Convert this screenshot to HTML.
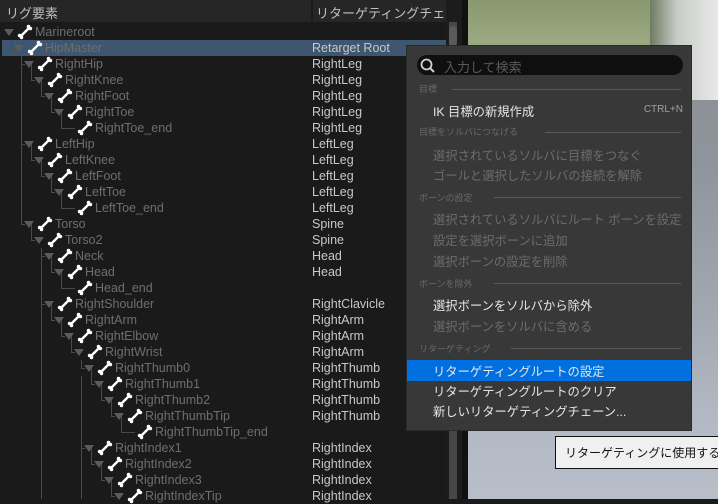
<!DOCTYPE html>
<html><head><meta charset="utf-8"><style>
*{margin:0;padding:0;box-sizing:border-box}
body{width:718px;height:499px;overflow:hidden;position:relative;background:#1a1a1a;font-family:"Liberation Sans","Noto Sans CJK JP",sans-serif;font-size:12.5px}
.abs{position:absolute}
.vp{left:468px;top:0;width:250px;height:499px;overflow:hidden;background:linear-gradient(180deg,#8a9870 0,#9aa882 40px,#8e9c78 90px,#8d9298 100px,#8e949c 160px,#a0a6ae 300px,#b3b9c4 420px,#b8bec8 499px)}
.vp2{left:650px;top:0;width:68px;height:100px;background:linear-gradient(90deg,#6d7c62,#c8ccc8 40%,#e8e8e8)}
.hdr{left:0;top:0;width:446px;height:22px;background:#262626}
.r{position:absolute;left:0;height:16px;width:446px;line-height:16px}
.n{position:absolute;color:#6e6e6e;white-space:nowrap}
.c{position:absolute;left:312px;color:#c8c8c8;white-space:nowrap}
.t{position:absolute;top:5px;width:0;height:0;border-left:5px solid transparent;border-right:5px solid transparent;border-top:7px solid #5b5b5b}
.b{position:absolute;top:0;width:16px;height:16px}
.vl{position:absolute;width:1px;background:#4a4a4a}
.hl{position:absolute;height:1px;background:#4a4a4a}
.menu{left:406px;top:45px;width:286px;height:386px;background:#383838;border:1px solid #2a2a2a;overflow:hidden}
.mh{position:absolute;left:12px;font-size:9px;color:#6a6a6a}
.ml{position:absolute;height:1px;background:#5a5a5a;right:10px}
.mi{position:absolute;left:26px;font-size:12.3px;color:#6c6c6c;white-space:nowrap}
.on{color:#e6e6e6}
</style></head><body>
<div class="abs vp"></div><div class="abs vp2"></div>
<div class="abs" style="left:446px;top:0;width:22px;height:499px;background:#1c1c1c"></div>
<div class="abs" style="left:449px;top:22px;width:8px;height:477px;background:#474747"></div>
<div class="abs" style="left:449px;top:26px;width:8px;height:20px;border-radius:4px;background:#5a5a5a"></div>
<div class="abs" style="left:462px;top:0;width:6px;height:499px;background:#111"></div>
<div class="abs hdr"></div>
<div class="abs" style="left:311px;top:0;width:2px;height:22px;background:#1a1a1a"></div>
<div class="abs" style="left:6px;top:3px;color:#c0c0c0;font-size:13px">リグ要素</div>
<div class="abs" style="left:316px;top:3px;color:#c0c0c0;font-size:13px;white-space:nowrap;width:128px;overflow:hidden">リターゲティングチェーン</div>
<div class="abs" style="left:2px;top:40px;width:444px;height:16px;background:#3f5670"></div>
<div class="vl" style="left:21px;top:56px;height:168px"></div>
<div class="vl" style="left:41px;top:248px;height:251px"></div>
<div class="vl" style="left:81px;top:376px;height:123px"></div>
<div class="vl" style="left:11px;top:40px;height:8px"></div>
<svg width="0" height="0" style="position:absolute"><defs><g id="bn"><line x1="4" y1="12" x2="12" y2="4" stroke="#fff" stroke-width="2.4"/><circle cx="2.6" cy="11.5" r="1.8" fill="#fff"/><circle cx="4.5" cy="13.4" r="1.8" fill="#fff"/><circle cx="11.5" cy="2.6" r="1.8" fill="#fff"/><circle cx="13.4" cy="4.5" r="1.8" fill="#fff"/></g></defs></svg>
<div id="rows">
<div class="r" style="top:24px"><div class="t" style="left:4px"></div><svg class="b" style="left:17px"><use href="#bn"/></svg><span class="n" style="left:35px">Marineroot</span></div>
<div class="r" style="top:40px"><div class="hl" style="left:11px;top:8px;width:4px"></div><div class="t" style="left:14px"></div><svg class="b" style="left:27px"><use href="#bn"/></svg><span class="n" style="left:45px">HipMaster</span><span class="c">Retarget Root</span></div>
<div class="r" style="top:56px"><div class="hl" style="left:21px;top:8px;width:4px"></div><div class="t" style="left:24px"></div><svg class="b" style="left:37px"><use href="#bn"/></svg><span class="n" style="left:55px">RightHip</span><span class="c">RightLeg</span></div>
<div class="r" style="top:72px"><div class="vl" style="left:31px;top:-8px;height:16px"></div><div class="hl" style="left:31px;top:8px;width:4px"></div><div class="t" style="left:34px"></div><svg class="b" style="left:47px"><use href="#bn"/></svg><span class="n" style="left:65px">RightKnee</span><span class="c">RightLeg</span></div>
<div class="r" style="top:88px"><div class="vl" style="left:41px;top:-8px;height:16px"></div><div class="hl" style="left:41px;top:8px;width:4px"></div><div class="t" style="left:44px"></div><svg class="b" style="left:57px"><use href="#bn"/></svg><span class="n" style="left:75px">RightFoot</span><span class="c">RightLeg</span></div>
<div class="r" style="top:104px"><div class="vl" style="left:51px;top:-8px;height:16px"></div><div class="hl" style="left:51px;top:8px;width:4px"></div><div class="t" style="left:54px"></div><svg class="b" style="left:67px"><use href="#bn"/></svg><span class="n" style="left:85px">RightToe</span><span class="c">RightLeg</span></div>
<div class="r" style="top:120px"><div class="vl" style="left:61px;top:-8px;height:16px"></div><div class="hl" style="left:61px;top:8px;width:14px"></div><svg class="b" style="left:77px"><use href="#bn"/></svg><span class="n" style="left:95px">RightToe_end</span><span class="c">RightLeg</span></div>
<div class="r" style="top:136px"><div class="hl" style="left:21px;top:8px;width:4px"></div><div class="t" style="left:24px"></div><svg class="b" style="left:37px"><use href="#bn"/></svg><span class="n" style="left:55px">LeftHip</span><span class="c">LeftLeg</span></div>
<div class="r" style="top:152px"><div class="vl" style="left:31px;top:-8px;height:16px"></div><div class="hl" style="left:31px;top:8px;width:4px"></div><div class="t" style="left:34px"></div><svg class="b" style="left:47px"><use href="#bn"/></svg><span class="n" style="left:65px">LeftKnee</span><span class="c">LeftLeg</span></div>
<div class="r" style="top:168px"><div class="vl" style="left:41px;top:-8px;height:16px"></div><div class="hl" style="left:41px;top:8px;width:4px"></div><div class="t" style="left:44px"></div><svg class="b" style="left:57px"><use href="#bn"/></svg><span class="n" style="left:75px">LeftFoot</span><span class="c">LeftLeg</span></div>
<div class="r" style="top:184px"><div class="vl" style="left:51px;top:-8px;height:16px"></div><div class="hl" style="left:51px;top:8px;width:4px"></div><div class="t" style="left:54px"></div><svg class="b" style="left:67px"><use href="#bn"/></svg><span class="n" style="left:85px">LeftToe</span><span class="c">LeftLeg</span></div>
<div class="r" style="top:200px"><div class="vl" style="left:61px;top:-8px;height:16px"></div><div class="hl" style="left:61px;top:8px;width:14px"></div><svg class="b" style="left:77px"><use href="#bn"/></svg><span class="n" style="left:95px">LeftToe_end</span><span class="c">LeftLeg</span></div>
<div class="r" style="top:216px"><div class="hl" style="left:21px;top:8px;width:4px"></div><div class="t" style="left:24px"></div><svg class="b" style="left:37px"><use href="#bn"/></svg><span class="n" style="left:55px">Torso</span><span class="c">Spine</span></div>
<div class="r" style="top:232px"><div class="vl" style="left:31px;top:-8px;height:16px"></div><div class="hl" style="left:31px;top:8px;width:4px"></div><div class="t" style="left:34px"></div><svg class="b" style="left:47px"><use href="#bn"/></svg><span class="n" style="left:65px">Torso2</span><span class="c">Spine</span></div>
<div class="r" style="top:248px"><div class="hl" style="left:41px;top:8px;width:4px"></div><div class="t" style="left:44px"></div><svg class="b" style="left:57px"><use href="#bn"/></svg><span class="n" style="left:75px">Neck</span><span class="c">Head</span></div>
<div class="r" style="top:264px"><div class="vl" style="left:51px;top:-8px;height:16px"></div><div class="hl" style="left:51px;top:8px;width:4px"></div><div class="t" style="left:54px"></div><svg class="b" style="left:67px"><use href="#bn"/></svg><span class="n" style="left:85px">Head</span><span class="c">Head</span></div>
<div class="r" style="top:280px"><div class="vl" style="left:61px;top:-8px;height:16px"></div><div class="hl" style="left:61px;top:8px;width:14px"></div><svg class="b" style="left:77px"><use href="#bn"/></svg><span class="n" style="left:95px">Head_end</span></div>
<div class="r" style="top:296px"><div class="hl" style="left:41px;top:8px;width:4px"></div><div class="t" style="left:44px"></div><svg class="b" style="left:57px"><use href="#bn"/></svg><span class="n" style="left:75px">RightShoulder</span><span class="c">RightClavicle</span></div>
<div class="r" style="top:312px"><div class="vl" style="left:51px;top:-8px;height:16px"></div><div class="hl" style="left:51px;top:8px;width:4px"></div><div class="t" style="left:54px"></div><svg class="b" style="left:67px"><use href="#bn"/></svg><span class="n" style="left:85px">RightArm</span><span class="c">RightArm</span></div>
<div class="r" style="top:328px"><div class="vl" style="left:61px;top:-8px;height:16px"></div><div class="hl" style="left:61px;top:8px;width:4px"></div><div class="t" style="left:64px"></div><svg class="b" style="left:77px"><use href="#bn"/></svg><span class="n" style="left:95px">RightElbow</span><span class="c">RightArm</span></div>
<div class="r" style="top:344px"><div class="vl" style="left:71px;top:-8px;height:16px"></div><div class="hl" style="left:71px;top:8px;width:4px"></div><div class="t" style="left:74px"></div><svg class="b" style="left:87px"><use href="#bn"/></svg><span class="n" style="left:105px">RightWrist</span><span class="c">RightArm</span></div>
<div class="r" style="top:360px"><div class="hl" style="left:81px;top:8px;width:4px"></div><div class="vl" style="left:81px;top:0;height:8px"></div><div class="t" style="left:84px"></div><svg class="b" style="left:97px"><use href="#bn"/></svg><span class="n" style="left:115px">RightThumb0</span><span class="c">RightThumb</span></div>
<div class="r" style="top:376px"><div class="vl" style="left:91px;top:-8px;height:16px"></div><div class="hl" style="left:91px;top:8px;width:4px"></div><div class="t" style="left:94px"></div><svg class="b" style="left:107px"><use href="#bn"/></svg><span class="n" style="left:125px">RightThumb1</span><span class="c">RightThumb</span></div>
<div class="r" style="top:392px"><div class="vl" style="left:101px;top:-8px;height:16px"></div><div class="hl" style="left:101px;top:8px;width:4px"></div><div class="t" style="left:104px"></div><svg class="b" style="left:117px"><use href="#bn"/></svg><span class="n" style="left:135px">RightThumb2</span><span class="c">RightThumb</span></div>
<div class="r" style="top:408px"><div class="vl" style="left:111px;top:-8px;height:16px"></div><div class="hl" style="left:111px;top:8px;width:4px"></div><div class="t" style="left:114px"></div><svg class="b" style="left:127px"><use href="#bn"/></svg><span class="n" style="left:145px">RightThumbTip</span><span class="c">RightThumb</span></div>
<div class="r" style="top:424px"><div class="vl" style="left:121px;top:-8px;height:16px"></div><div class="hl" style="left:121px;top:8px;width:14px"></div><svg class="b" style="left:137px"><use href="#bn"/></svg><span class="n" style="left:155px">RightThumbTip_end</span></div>
<div class="r" style="top:440px"><div class="hl" style="left:81px;top:8px;width:4px"></div><div class="t" style="left:84px"></div><svg class="b" style="left:97px"><use href="#bn"/></svg><span class="n" style="left:115px">RightIndex1</span><span class="c">RightIndex</span></div>
<div class="r" style="top:456px"><div class="vl" style="left:91px;top:-8px;height:16px"></div><div class="hl" style="left:91px;top:8px;width:4px"></div><div class="t" style="left:94px"></div><svg class="b" style="left:107px"><use href="#bn"/></svg><span class="n" style="left:125px">RightIndex2</span><span class="c">RightIndex</span></div>
<div class="r" style="top:472px"><div class="vl" style="left:101px;top:-8px;height:16px"></div><div class="hl" style="left:101px;top:8px;width:4px"></div><div class="t" style="left:104px"></div><svg class="b" style="left:117px"><use href="#bn"/></svg><span class="n" style="left:135px">RightIndex3</span><span class="c">RightIndex</span></div>
<div class="r" style="top:488px"><div class="vl" style="left:111px;top:-8px;height:16px"></div><div class="hl" style="left:111px;top:8px;width:4px"></div><div class="t" style="left:114px"></div><svg class="b" style="left:127px"><use href="#bn"/></svg><span class="n" style="left:145px">RightIndexTip</span><span class="c">RightIndex</span></div>
</div>

<div class="abs menu">
 <div class="abs" style="left:10px;top:9px;width:266px;height:20px;border-radius:10px;background:#0f0f0f"></div>
 <svg class="abs" style="left:13px;top:12px" width="16" height="16"><circle cx="6.5" cy="6.5" r="5" fill="none" stroke="#d0d0d0" stroke-width="1.8"/><line x1="10" y1="10" x2="14" y2="14" stroke="#d0d0d0" stroke-width="2"/></svg>
 <div class="abs" style="left:37px;top:11px;color:#5a5a5a;font-size:13px">入力して検索</div>
 <div class="mh" style="top:36px">目標</div><div class="ml" style="left:45px;top:43px"></div>
 <div class="mi on" style="top:56px">IK 目標の新規作成</div><div class="abs" style="right:8px;top:58px;font-size:10px;color:#a0a0a0">CTRL+N</div>
 <div class="mh" style="top:79px">目標をソルバにつなげる</div><div class="ml" style="left:138px;top:86px"></div>
 <div class="mi" style="top:100px">選択されているソルバに目標をつなぐ</div>
 <div class="mi" style="top:120px">ゴールと選択したソルバの接続を解除</div>
 <div class="mh" style="top:145px">ボーンの設定</div><div class="ml" style="left:87px;top:151px"></div>
 <div class="mi" style="top:164px">選択されているソルバにルート ボーンを設定</div>
 <div class="mi" style="top:185px">設定を選択ボーンに追加</div>
 <div class="mi" style="top:206px">選択ボーンの設定を削除</div>
 <div class="mh" style="top:231px">ボーンを除外</div><div class="ml" style="left:87px;top:237px"></div>
 <div class="mi on" style="top:250px">選択ボーンをソルバから除外</div>
 <div class="mi" style="top:271px">選択ボーンをソルバに含める</div>
 <div class="mh" style="top:296px">リターゲティング</div><div class="ml" style="left:104px;top:302px"></div>
 <div class="abs" style="left:0;top:314px;width:284px;height:21px;background:#0070e0"></div>
 <div class="mi on" style="top:316px">リターゲティングルートの設定</div>
 <div class="mi on" style="top:336px">リターゲティングルートのクリア</div>
 <div class="mi on" style="top:356px">新しいリターゲティングチェーン...</div>
</div>
<div class="abs" style="left:555px;top:436px;width:163px;height:33px;overflow:hidden;background:#f0f0f0;border:1px solid #111;border-right:none;padding:7px 0 0 9px;font-size:12px;color:#111;white-space:nowrap">リターゲティングに使用するルート</div>
</body></html>
